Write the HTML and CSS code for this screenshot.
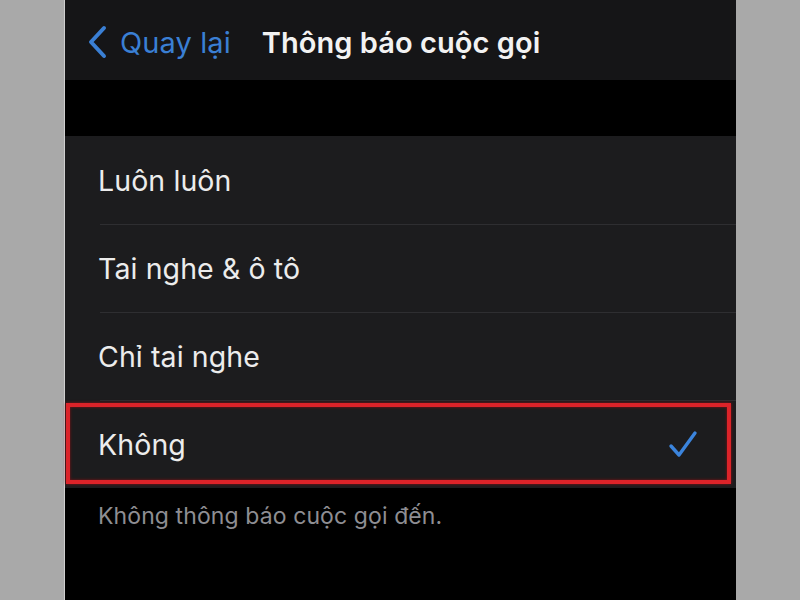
FILE: index.html
```html
<!DOCTYPE html>
<html lang="vi">
<head>
<meta charset="utf-8">
<link rel="stylesheet" href="styles.css">
</head>
<body>
<div class="phone">
  <header class="nav">
    <div class="back">
      <svg class="chev" width="22" height="34" viewBox="0 0 22 34"><path d="M18 3 L5 17 L18 31" fill="none" stroke="#3a7fd4" stroke-width="4" stroke-linecap="round" stroke-linejoin="round"/></svg>
      <span class="back-label">Quay lại</span>
    </div>
    <div class="title">Thông báo cuộc gọi</div>
  </header>
  <div class="gap"></div>
  <ul class="list">
    <li class="row"><span>Luôn luôn</span></li>
    <li class="row"><span>Tai nghe &amp; ô tô</span></li>
    <li class="row"><span>Chỉ tai nghe</span></li>
    <li class="row selected"><span>Không</span>
      <svg class="check" width="30" height="28" viewBox="0 0 30 28"><path d="M3 16 L11 25 L27 3" fill="none" stroke="#3b84dc" stroke-width="3.4" stroke-linecap="round" stroke-linejoin="round"/></svg>
    </li>
  </ul>
  <p class="footer">Không thông báo cuộc gọi đến.</p>
</div>
</body>
</html>
```
FILE: styles.css
```css
html, body {
  margin: 0;
  padding: 0;
  height: 100%;
}
body {
  background: #a9a9a9;
  font-family: Inter, "Liberation Sans", Arial, sans-serif;
  overflow: hidden;
}
.phone {
  margin-left: 64px;
  width: 672px;
  height: 600px;
  background: #000;
  border-left: 1px solid #cfcfcf;
  box-sizing: border-box;
}
.nav {
  height: 80px;
  background: #151517;
  display: flex;
  align-items: center;
  padding-left: 21px;
  padding-top: 4px;
  box-sizing: border-box;
}
.back {
  display: flex;
  align-items: center;
  gap: 12px;
}
.chev {
  display: block;
}
.back-label {
  color: #3a7fd4;
  font-size: 29px;
  letter-spacing: 0.1px;
}
.title {
  margin-left: 31px;
  color: #f2f2f2;
  font-size: 29px;
  font-weight: 600;
  letter-spacing: 0.05px;
}
.gap {
  height: 56px;
  background: #000;
}
.list {
  list-style: none;
  margin: 0;
  padding: 0;
  background: #1c1c1e;
}
.row {
  position: relative;
  height: 88px;
  display: flex;
  align-items: center;
  justify-content: space-between;
  padding: 0 38px 0 33px;
  color: #ececec;
  font-size: 28.5px;
  letter-spacing: 0.1px;
  box-sizing: border-box;
}
.row + .row::before {
  content: "";
  position: absolute;
  top: 0;
  left: 35px;
  right: 0;
  height: 1px;
  background: #2e2e31;
}
.selected::after {
  content: "";
  position: absolute;
  left: 1px;
  right: 5px;
  top: 3px;
  bottom: 4px;
  border: 4px solid #dc2329;
  box-shadow: 0 0 3px #8a1015, inset 0 0 3px #8a1015;
}
.check {
  display: block;
}
.footer {
  margin: 0;
  padding: 14px 0 0 33px;
  color: #8e8e93;
  font-size: 23px;
  letter-spacing: 0.1px;
}
```
